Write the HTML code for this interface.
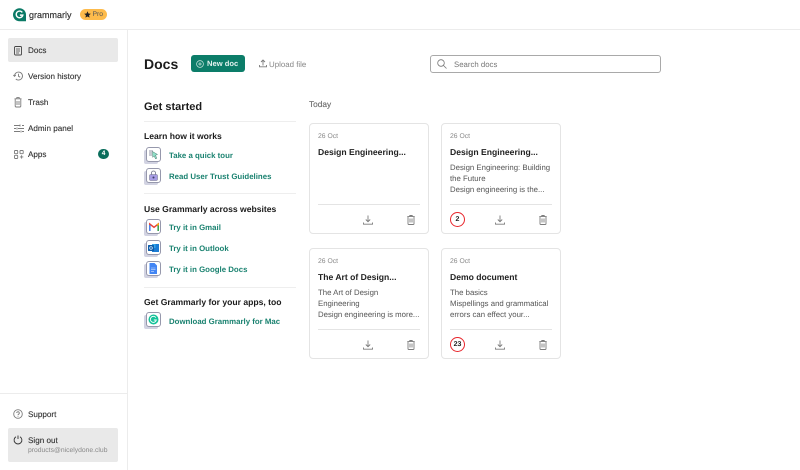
<!DOCTYPE html>
<html><head><meta charset="utf-8"><style>
html,body{margin:0;padding:0;background:#fff}
body{width:800px;height:470px;overflow:hidden;position:relative;font-family:"Liberation Sans",sans-serif;color:#222;text-rendering:geometricPrecision}
.a,.t{position:absolute}
.t{white-space:nowrap;line-height:12px}
svg{position:absolute;overflow:visible}
.nav{font-size:8.1px;color:#333;left:28px;-webkit-text-stroke:.12px #333}
.h3{font-size:8.6px;font-weight:bold;left:144px;color:#1c1c1c}
.lnk{font-size:7.85px;font-weight:bold;left:169px;color:#1a8270}
.card{position:absolute;width:118px;height:109px;border:1px solid #e4e4e4;border-radius:4px;box-sizing:content-box;background:#fff}
.date{position:absolute;left:8px;top:8px;font-size:6.8px;color:#888;line-height:10px;white-space:nowrap}
.ct{position:absolute;left:8px;top:22px;font-size:8.6px;font-weight:bold;color:#222;line-height:12px;white-space:nowrap}
.cb{position:absolute;left:8px;top:38px;font-size:7.8px;color:#555;line-height:11.2px;white-space:nowrap}
.ln{position:absolute;left:8px;width:102px;top:80px;height:1px;background:#e4e4e4}
.dis{position:absolute;left:8px;top:88px;width:13px;height:13px;border:1.2px solid #e8262c;border-radius:50%;font-size:7px;font-weight:bold;line-height:14px;text-align:center;color:#222;box-sizing:content-box}
.i{fill:none;stroke:#7c7c7c;stroke-width:.9}
.g{position:absolute;width:17px;height:17px;left:144px}
.g .sh{position:absolute;left:0;top:2.5px;width:14px;height:14px;border-radius:2px;background:#d2d3e2}
.g .fr{position:absolute;left:2px;top:0;border-radius:3px;background:#fff;border:1px solid #9698ac;box-sizing:content-box;width:13px;height:13px}
</style></head><body>

<div class="a" style="left:0;top:29px;width:800px;height:1px;background:#ececec"></div>
<div class="a" style="left:127px;top:30px;width:1px;height:440px;background:#ececec"></div>
<div class="a" style="left:0;top:393px;width:127px;height:1px;background:#ececec"></div>

<!-- logo -->
<svg style="left:12.5px;top:8px" width="13" height="13.5" viewBox="0 0 14 14"><path d="M7 0A7 7 0 0 1 14 7v7H7A7 7 0 0 1 7 0z" fill="#0b7a66"/><path d="M10 4.500A3.600 3.600 0 1 0 10.600 7.400H7.400" fill="none" stroke="#fff" stroke-width="1.500"/></svg>
<div class="t" style="left:29px;top:9px;font-size:9px;color:#333;-webkit-text-stroke:.2px #333">grammarly</div>
<div class="a" style="left:80px;top:8.5px;width:27px;height:11.5px;background:#fdbb4c;border-radius:5.5px"></div>
<svg style="left:84px;top:11px" width="7" height="7" viewBox="0 0 24 24"><path d="M12 1l3.400 7.400 8 .9-6 5.400 1.700 8L12 18.700l-7.100 4 1.700-8-6-5.400 8-.9z" fill="#222"/></svg>
<div class="t" style="left:92.5px;top:9px;font-size:6.8px;color:#555;line-height:11.5px">Pro</div>

<!-- sidebar -->
<div class="a" style="left:8px;top:38px;width:110px;height:24px;background:#e9e9e9;border-radius:2px"></div>
<svg style="left:13px;top:45.5px" width="10" height="11" viewBox="0 0 10 11"><rect x="1.500" y=".5" width="7" height="8.500" rx="1" fill="none" stroke="#444" stroke-width=".9"/><path d="M3 3h4M3 5h4M3 7h3" stroke="#444" stroke-width=".8"/></svg>
<div class="t nav" style="top:45px">Docs</div>
<svg style="left:13px;top:71px" width="11" height="10" viewBox="0 0 11 10"><path class="i" d="M1.500 5a4 4 0 1 1 1.300 3M.3 4l1.200 1.300L2.800 4M5.500 2.800v2.500l1.700.9"/></svg>
<div class="t nav" style="top:71px">Version history</div>
<svg style="left:14px;top:97px" width="8" height="11" viewBox="0 0 8 11"><path class="i" d="M.5 1.800h7M2.800 1.800V.6h2.400v1.200M1.200 1.800v7.200q0 1 1 1h3.600q1 0 1-1V1.800M3 4v4M5 4v4"/></svg>
<div class="t nav" style="top:97px">Trash</div>
<svg style="left:13.5px;top:124px" width="10" height="9" viewBox="0 0 10 9"><path class="i" d="M0 1.500h6M8 1.500h2M6 .5v2M0 4.500h2M4 4.500h6M3 3.500v2M0 7.500h6M8 7.500h2M7 6.500v2"/></svg>
<div class="t nav" style="top:123px">Admin panel</div>
<svg style="left:13.5px;top:149.5px" width="10" height="9" viewBox="0 0 10 9"><rect class="i" x=".5" y=".5" width="3.200" height="3.200" rx=".6"/><rect class="i" x="6" y=".5" width="3.200" height="3.200" rx=".6"/><rect class="i" x=".5" y="5.300" width="3.200" height="3.200" rx=".6"/><path class="i" d="M7.600 5.200v3.400M5.900 6.900h3.400"/></svg>
<div class="t nav" style="top:149px">Apps</div>
<div class="a" style="left:98px;top:149px;width:11px;height:10px;background:#0b6e5c;border-radius:5px;color:#fff;font-size:6.5px;font-weight:bold;line-height:10px;text-align:center">4</div>

<svg style="left:13px;top:409px" width="10" height="10" viewBox="0 0 10 10"><circle class="i" cx="5" cy="5" r="4.300"/><path class="i" d="M3.700 4a1.300 1.300 0 1 1 1.900 1.200q-.6.300-.6 1M5 7.100v.7"/></svg>
<div class="t nav" style="top:409px">Support</div>
<div class="a" style="left:8px;top:428px;width:110px;height:34px;background:#e9e9e9;border-radius:2px"></div>
<svg style="left:13px;top:435px" width="10" height="10" viewBox="0 0 10 10"><path d="M3 1.700a3.900 3.900 0 1 0 4 0M5 .5v3.500" fill="none" stroke="#333" stroke-width=".9"/></svg>
<div class="t nav" style="top:435px">Sign out</div>
<div class="t" style="left:28px;top:445px;font-size:6.78px;color:#8a8a8a">products@nicelydone.club</div>

<!-- top bar -->
<div class="t" style="left:144px;top:55px;font-size:14px;font-weight:bold;color:#1c1c1c;line-height:18px">Docs</div>
<div class="a" style="left:191px;top:55px;width:53.5px;height:17px;background:#0c7d69;border-radius:3px"></div>
<svg style="left:196px;top:59.5px" width="8" height="8" viewBox="0 0 8 8"><circle cx="4" cy="4" r="3.400" fill="none" stroke="#cfe8e2" stroke-width=".7"/><path d="M4 2.200v3.600M2.200 4h3.600" stroke="#cfe8e2" stroke-width=".7"/></svg>
<div class="t" style="left:207px;top:58px;font-size:7.6px;font-weight:bold;color:#e4f2ef">New doc</div>
<svg style="left:259px;top:59px" width="8" height="9" viewBox="0 0 8 9"><path class="i" d="M4 6.500V1M2 3l2-2 2 2M.5 6v1.800h7V6"/></svg>
<div class="t" style="left:269px;top:59px;font-size:7.9px;color:#888">Upload file</div>

<div class="a" style="left:430px;top:55px;width:230.5px;height:17.5px;border:1px solid #a9a9a9;border-radius:3px;box-sizing:border-box"></div>
<svg style="left:437px;top:59px" width="10" height="10" viewBox="0 0 10 10"><circle cx="4" cy="4" r="3.300" fill="none" stroke="#777" stroke-width=".8"/><path d="M6.500 6.500L9.500 9.500" stroke="#777" stroke-width=".8"/></svg>
<div class="t" style="left:454px;top:59px;font-size:7.8px;color:#777">Search docs</div>

<!-- left column -->
<div class="t" style="left:144px;top:101px;font-size:11px;font-weight:bold;color:#1c1c1c">Get started</div>
<div class="a" style="left:144px;top:121px;width:152px;height:1px;background:#eeeeee"></div>
<div class="t h3" style="top:130px">Learn how it works</div>

<div class="g" style="top:147px"><div class="sh"></div><div class="fr"></div>
<svg style="left:5px;top:3px" width="10" height="10" viewBox="0 0 10 10"><path d="M0 1h4M0 3h3M0 5h3" stroke="#6f7088" stroke-width=".7"/><path d="M3.500 1.500l5 3-2 .8 1.300 3-1.300.6-1.300-3-1.500 1.500z" fill="#8fe0c8" stroke="#4b7a70" stroke-width=".5"/></svg></div>
<div class="t lnk" style="top:150px">Take a quick tour</div>

<div class="g" style="top:168px"><div class="sh"></div><div class="fr"></div>
<svg style="left:4px;top:2px" width="11" height="11" viewBox="0 0 11 11"><path d="M3.500 4.500V3a2 2 0 0 1 4 0v1.500" fill="none" stroke="#6f7088" stroke-width=".8"/><rect x="1.500" y="4.500" width="8" height="6" rx="1" fill="#a79ce4" stroke="#6f7088" stroke-width=".5"/><circle cx="5.500" cy="7.500" r="1" fill="#3d3d6a"/></svg></div>
<div class="t lnk" style="top:171px">Read User Trust Guidelines</div>

<div class="a" style="left:144px;top:193px;width:152px;height:1px;background:#eeeeee"></div>
<div class="t h3" style="top:203px">Use Grammarly across websites</div>

<div class="g" style="top:219px"><div class="sh"></div><div class="fr"></div>
<svg style="left:5px;top:4px" width="10" height="8" viewBox="0 0 10 8"><path d="M.8 8V1L5 4.300 9.200 1v7" fill="none" stroke="#e94335" stroke-width="1.500"/><path d="M.8 8V2" stroke="#4285f4" stroke-width="1.500"/><path d="M9.200 8V2" stroke="#34a853" stroke-width="1.500"/><path d="M8 1.500L9.200 1v1.500" stroke="#fbbc04" stroke-width="1.200" fill="none"/></svg></div>
<div class="t lnk" style="top:222px">Try it in Gmail</div>

<div class="g" style="top:240px"><div class="sh"></div><div class="fr"></div>
<svg style="left:4px;top:3px" width="11" height="10" viewBox="0 0 11 10"><rect x="4" y="1" width="7" height="8" fill="#1c7cd4"/><rect x="4" y="1" width="3.500" height="4" fill="#35a8ea"/><rect x="0" y="2" width="6" height="6" rx=".6" fill="#0b5cab"/><circle cx="3" cy="5" r="1.300" fill="none" stroke="#fff" stroke-width=".7"/></svg></div>
<div class="t lnk" style="top:243px">Try it in Outlook</div>

<div class="g" style="top:261px"><div class="sh"></div><div class="fr"></div>
<svg style="left:5px;top:2px" width="8" height="11" viewBox="0 0 8 11"><path d="M.5 0H5.500L8 2.500V11H.5z" fill="#4285f4"/><path d="M2 5h4.500M2 6.700h4.500M2 8.400h3" stroke="#cfe0fc" stroke-width=".6"/></svg></div>
<div class="t lnk" style="top:264px">Try it in Google Docs</div>

<div class="a" style="left:144px;top:287px;width:152px;height:1px;background:#eeeeee"></div>
<div class="t h3" style="top:296px">Get Grammarly for your apps, too</div>

<div class="g" style="top:312px"><div class="sh"></div><div class="fr"></div>
<svg style="left:4px;top:2px" width="11" height="11" viewBox="0 0 11 11"><circle cx="5.500" cy="5.500" r="5" fill="#15c39a"/><path d="M7.800 3.600A3 3 0 1 0 8.300 6H5.800" fill="none" stroke="#fff" stroke-width=".9"/></svg></div>
<div class="t lnk" style="top:316px">Download Grammarly for Mac</div>

<!-- today -->
<div class="t" style="left:309px;top:98px;font-size:8.3px;color:#666;-webkit-text-stroke:.1px #666">Today</div>

<div class="card" style="left:309px;top:123px">
  <div class="date">26 Oct</div><div class="ct">Design Engineering...</div>
  <div class="ln"></div>
  <svg style="left:53px;top:91px" width="10" height="10" viewBox="0 0 10 10"><path class="i" d="M5 .5v6M2.800 4.500L5 6.700l2.200-2.200M.5 7.500v1.700h9V7.500"/></svg>
  <svg style="left:97px;top:91px" width="8" height="10" viewBox="0 0 8 10"><path class="i" d="M.3 1.600h7.400M2.800 1.500V.5h2.400v1M1 1.600v7q0 .9.900.9h4.200q.9 0 .9-.9v-7M3 3.500v4M5 3.500v4"/></svg>
</div>

<div class="card" style="left:441px;top:123px">
  <div class="date">26 Oct</div><div class="ct">Design Engineering...</div>
  <div class="cb">Design Engineering: Building<br>the Future<br>Design engineering is the...</div>
  <div class="ln"></div>
  <div class="dis">2</div>
  <svg style="left:53px;top:91px" width="10" height="10" viewBox="0 0 10 10"><path class="i" d="M5 .5v6M2.800 4.500L5 6.700l2.200-2.200M.5 7.500v1.700h9V7.500"/></svg>
  <svg style="left:97px;top:91px" width="8" height="10" viewBox="0 0 8 10"><path class="i" d="M.3 1.600h7.400M2.800 1.500V.5h2.400v1M1 1.600v7q0 .9.900.9h4.200q.9 0 .9-.9v-7M3 3.500v4M5 3.500v4"/></svg>
</div>

<div class="card" style="left:309px;top:248px">
  <div class="date">26 Oct</div><div class="ct">The Art of Design...</div>
  <div class="cb">The Art of Design<br>Engineering<br>Design engineering is more...</div>
  <div class="ln"></div>
  <svg style="left:53px;top:91px" width="10" height="10" viewBox="0 0 10 10"><path class="i" d="M5 .5v6M2.800 4.500L5 6.700l2.200-2.200M.5 7.500v1.700h9V7.500"/></svg>
  <svg style="left:97px;top:91px" width="8" height="10" viewBox="0 0 8 10"><path class="i" d="M.3 1.600h7.400M2.800 1.500V.5h2.400v1M1 1.600v7q0 .9.900.9h4.200q.9 0 .9-.9v-7M3 3.500v4M5 3.500v4"/></svg>
</div>

<div class="card" style="left:441px;top:248px">
  <div class="date">26 Oct</div><div class="ct">Demo document</div>
  <div class="cb">The basics<br>Mispellings and grammatical<br>errors can effect your...</div>
  <div class="ln"></div>
  <div class="dis">23</div>
  <svg style="left:53px;top:91px" width="10" height="10" viewBox="0 0 10 10"><path class="i" d="M5 .5v6M2.800 4.500L5 6.700l2.200-2.200M.5 7.500v1.700h9V7.500"/></svg>
  <svg style="left:97px;top:91px" width="8" height="10" viewBox="0 0 8 10"><path class="i" d="M.3 1.600h7.400M2.800 1.500V.5h2.400v1M1 1.600v7q0 .9.900.9h4.200q.9 0 .9-.9v-7M3 3.500v4M5 3.500v4"/></svg>
</div>

</body></html>
